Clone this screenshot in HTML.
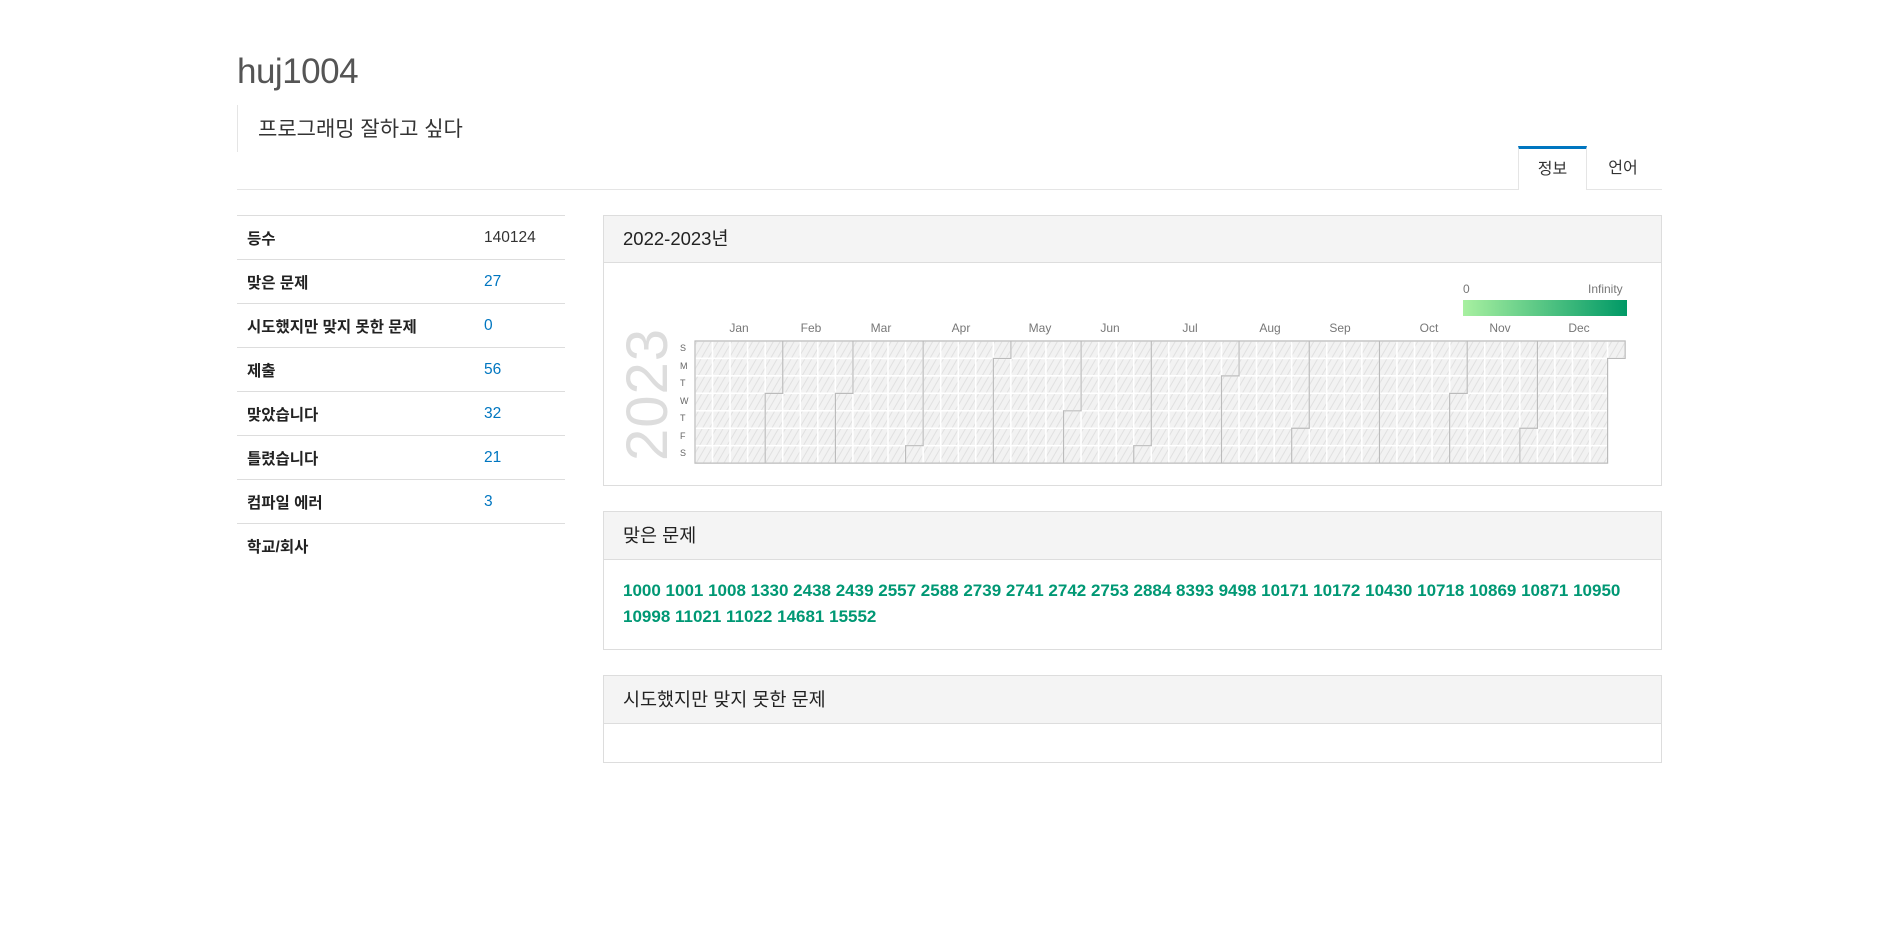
<!DOCTYPE html>
<html><head><meta charset="utf-8">
<style>
*{box-sizing:border-box;margin:0;padding:0}
body{width:1894px;height:925px;background:#fff;font-family:"Liberation Sans","Noto Sans CJK KR",sans-serif;color:#333;position:relative;overflow:hidden}
.abs{position:absolute}
h1{position:absolute;left:237px;top:52px;font-size:35px;font-weight:400;color:#555;letter-spacing:-0.5px}
.bq{position:absolute;left:237px;top:105px;height:47px;border-left:1px solid #e5e5e5;padding-left:20px;font-size:21px;line-height:49px;color:#333}
.tabline{position:absolute;left:237px;top:189px;width:1425px;border-top:1px solid #e5e5e5}
.tab{position:absolute;top:146px;height:44px;line-height:46px;font-size:16px;text-align:center;color:#333}
.tab.on{left:1518px;width:69px;border-top:3px solid #0076c0;border-left:1px solid #e5e5e5;border-right:1px solid #e5e5e5;background:#fff;line-height:42px}
table{position:absolute;left:237px;top:215px;width:328px;border-collapse:collapse;font-size:15.5px}
td{height:44px;border-top:1px solid #ddd;padding-left:10px;padding-top:0}
td.l{font-weight:bold;color:#222;width:237px}
td.v{color:#0076c0;padding-left:10px}
.panel{position:absolute;left:603px;width:1059px;border:1px solid #ddd;background:#fff}
.ph{background:#f4f4f4;border-bottom:1px solid #ddd;font-size:18.5px;padding-left:19px;color:#222}
.nums{color:#009874;font-weight:bold;font-size:17px;line-height:26px;padding:18px 19px 0 19px}
.ml{position:absolute;top:321px;font-size:12px;color:#777;transform:translateX(-50%)}
.dl{position:absolute;left:680px;font-size:9px;color:#666}
</style></head><body>
<h1>huj1004</h1>
<div class="bq">프로그래밍 잘하고 싶다</div>
<div class="tabline"></div>
<div class="tab on">정보</div>
<div class="tab" style="left:1595px;width:56px">언어</div>

<table>
<tr><td class="l">등수</td><td style="color:#333">140124</td></tr>
<tr><td class="l">맞은 문제</td><td class="v">27</td></tr>
<tr><td class="l">시도했지만 맞지 못한 문제</td><td class="v">0</td></tr>
<tr><td class="l">제출</td><td class="v">56</td></tr>
<tr><td class="l">맞았습니다</td><td class="v">32</td></tr>
<tr><td class="l">틀렸습니다</td><td class="v">21</td></tr>
<tr><td class="l">컴파일 에러</td><td class="v">3</td></tr>
<tr><td class="l">학교/회사</td><td></td></tr>
</table>

<div class="panel" style="top:215px;height:271px">
<div class="ph" style="height:47px;line-height:46px">2022-2023년</div>
</div>
<div class="abs" style="left:1463px;top:282px;font-size:12px;color:#777">0</div>
<div class="abs" style="left:1588px;top:282px;font-size:12px;color:#777">Infinity</div>
<div class="abs" style="left:1463px;top:300px;width:164px;height:16px;background:linear-gradient(90deg,#a8f0a0,#009966)"></div>
<div class="ml" style="left:739px">Jan</div><div class="ml" style="left:811px">Feb</div><div class="ml" style="left:881px">Mar</div><div class="ml" style="left:961px">Apr</div><div class="ml" style="left:1040px">May</div><div class="ml" style="left:1110px">Jun</div><div class="ml" style="left:1190px">Jul</div><div class="ml" style="left:1270px">Aug</div><div class="ml" style="left:1340px">Sep</div><div class="ml" style="left:1429px">Oct</div><div class="ml" style="left:1500px">Nov</div><div class="ml" style="left:1579px">Dec</div>
<div class="dl" style="top:343px">S</div><div class="dl" style="top:361px">M</div><div class="dl" style="top:378px">T</div><div class="dl" style="top:396px">W</div><div class="dl" style="top:413px">T</div><div class="dl" style="top:431px">F</div><div class="dl" style="top:448px">S</div>
<div class="abs" style="left:590px;top:373px;width:116px;height:60px;font-size:58px;line-height:60px;color:#ddd;transform:rotate(-90deg);text-align:center;letter-spacing:1px">2023</div>
<svg class="abs" style="left:0;top:0" width="1894" height="925" id="hm">
<defs><pattern id="h" width="6" height="6" patternUnits="userSpaceOnUse" patternTransform="rotate(30)"><rect width="6" height="6" fill="#f2f2f2"/><line x1="0" y1="0" x2="0" y2="6" stroke="#e0e0e0" stroke-width="2"/></pattern></defs>
<g id="cells"></g><path id="mb" fill="none" stroke="#bbb" stroke-width="1.2"/>
</svg>
<script>
(function(){var X=695,Y=341,W=17.55,H=17.45,g=document.getElementById('cells'),s='';
for(var d=0;d<365;d++){var c=Math.floor(d/7),r=d%7;s+='<rect x="'+(X+c*W)+'" y="'+(Y+r*H)+'" width="'+W+'" height="'+H+'" fill="url(#h)" stroke="#fff" stroke-width="1.5"/>';}
g.innerHTML=s;
var ml=[31,28,31,30,31,30,31,31,30,31,30,31],p='',d0=0;
for(var m=0;m<11;m++){d0+=ml[m];var c=Math.floor(d0/7),r=d0%7;
if(r==0)p+='M'+(X+c*W)+' '+Y+'V'+(Y+7*H);
else p+='M'+(X+(c+1)*W)+' '+Y+'V'+(Y+r*H)+'H'+(X+c*W)+'V'+(Y+7*H);}
p+='M'+X+' '+Y+'H'+(X+53*W)+'V'+(Y+H)+'H'+(X+52*W)+'V'+(Y+7*H)+'H'+X+'Z';
document.getElementById('mb').setAttribute('d',p);})();
</script>

<div class="panel" style="top:511px;height:139px">
<div class="ph" style="height:48px;line-height:47px">맞은 문제</div>
<div class="nums">1000 1001 1008 1330 2438 2439 2557 2588 2739 2741 2742 2753 2884 8393 9498 10171 10172 10430 10718 10869 10871 10950<br>10998 11021 11022 14681 15552</div>
</div>
<div class="panel" style="top:675px;height:88px">
<div class="ph" style="height:48px;line-height:47px">시도했지만 맞지 못한 문제</div>
</div>
</body></html>
